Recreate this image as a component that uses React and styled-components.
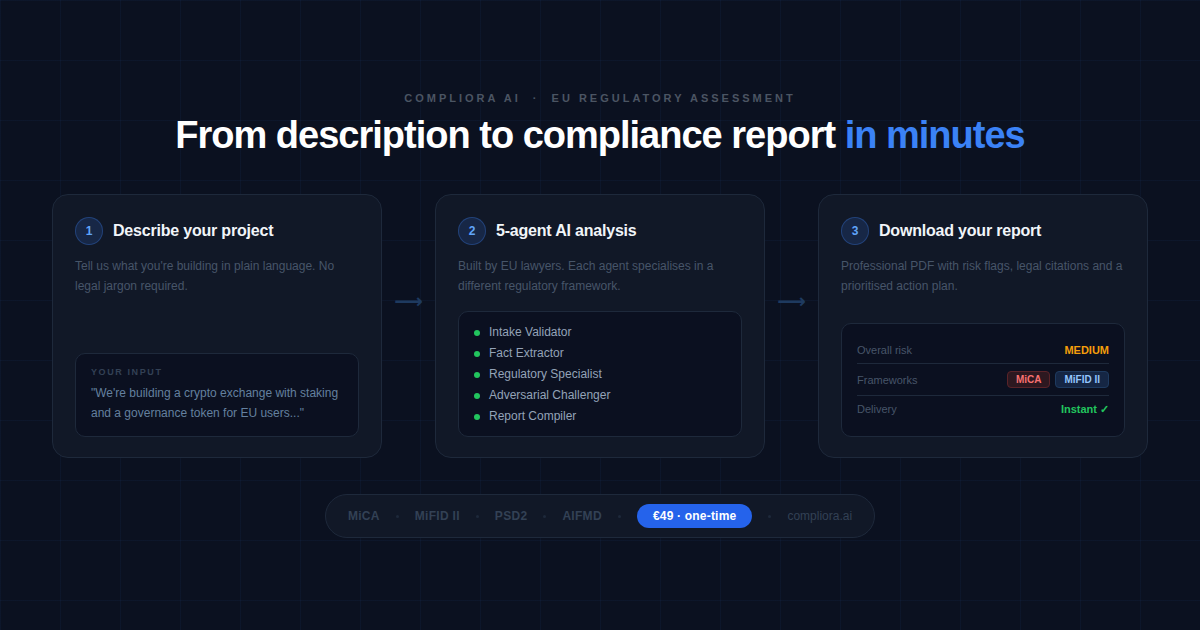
import React from 'react'
import styled, { createGlobalStyle } from 'styled-components'

const GlobalStyle = createGlobalStyle`
  * { box-sizing: border-box; }
  html, body { margin: 0; padding: 0; }
  body { background: #0b1120; font-family: "Liberation Sans", Arial, sans-serif; }
`

const Page = styled.div`
  width: 1200px;
  height: 630px;
  overflow: hidden;
  padding: 92px 52px 0;
  display: flex;
  flex-direction: column;
  align-items: center;
  background-color: #0b1120;
  background-image:
    linear-gradient(rgba(59, 130, 246, 0.05) 1px, transparent 1px),
    linear-gradient(90deg, rgba(59, 130, 246, 0.05) 1px, transparent 1px);
  background-size: 60px 60px;
`

const Eyebrow = styled.div`
  font-size: 11px;
  line-height: 13px;
  font-weight: 700;
  letter-spacing: 3px;
  color: #4b5563;
  white-space: pre;
`

const Title = styled.h1`
  margin: 7px 0 36px;
  font-size: 38px;
  line-height: 46px;
  font-weight: 700;
  letter-spacing: -1px;
  color: #ffffff;
`

const Accent = styled.span`
  color: #3b82f6;
`

const Steps = styled.div`
  width: 100%;
  display: flex;
  align-items: stretch;
`

const Card = styled.section`
  flex: 0 0 330px;
  height: 264px;
  padding: 22px 22px 20px;
  display: flex;
  flex-direction: column;
  background: #111827;
  border: 1px solid #1e293b;
  border-radius: 16px;
`

const CardHead = styled.div`
  display: flex;
  align-items: center;
  gap: 10px;
  margin-bottom: 11px;
`

const Badge = styled.span`
  flex: 0 0 28px;
  height: 28px;
  display: flex;
  align-items: center;
  justify-content: center;
  border-radius: 50%;
  background: rgba(59, 130, 246, 0.15);
  border: 1px solid rgba(59, 130, 246, 0.3);
  color: #60a5fa;
  font-size: 12px;
  font-weight: 700;
`

const CardTitle = styled.h2`
  margin: 0;
  font-size: 16px;
  line-height: 28px;
  font-weight: 700;
  letter-spacing: -0.2px;
  color: #f1f5f9;
`

const Desc = styled.p`
  margin: 0;
  font-size: 12px;
  line-height: 20px;
  color: #475569;
`

const Inset = styled.div`
  margin-top: auto;
  background: #0b1020;
  border: 1px solid #1e293b;
  border-radius: 10px;
  padding: ${(p) => p.$pad};
`

const InputLabel = styled.div`
  font-size: 9px;
  line-height: 11px;
  font-weight: 700;
  letter-spacing: 1.6px;
  color: #334155;
  margin-bottom: 5px;
`

const Quote = styled.div`
  font-size: 12px;
  line-height: 20px;
  color: #64809f;
`

const AgentRow = styled.div`
  display: flex;
  align-items: center;
  gap: 9px;
  font-size: 12px;
  line-height: 21px;
  color: #94a3b8;
`

const Dot = styled.span`
  width: 6px;
  height: 6px;
  border-radius: 50%;
  background: #22c55e;
`

const Arrow = styled.div`
  flex: 1;
  display: flex;
  align-items: center;
  justify-content: center;
  padding-bottom: 50px;
  font-family: "DejaVu Sans", sans-serif;
  font-size: 20px;
  font-weight: 700;
  color: #1e3a5f;
`

const ResultRow = styled.div`
  display: flex;
  align-items: center;
  justify-content: space-between;
  height: ${(p) => p.$h}px;
  border-bottom: ${(p) => (p.$last ? 'none' : '1px solid #1e293b')};
`

const ResultLabel = styled.span`
  font-size: 11px;
  color: #475569;
`

const ResultValue = styled.span`
  font-size: 11px;
  font-weight: 700;
  color: ${(p) => p.$color};
`

const Tags = styled.div`
  display: flex;
  gap: 5px;
`

const Tag = styled.span`
  height: 17px;
  padding: 0 8px;
  display: flex;
  align-items: center;
  border-radius: 4px;
  font-size: 10px;
  font-weight: 700;
  color: ${(p) => (p.$red ? '#f87171' : '#93c5fd')};
  background: ${(p) => (p.$red ? '#2d1820' : '#152644')};
  border: 1px solid ${(p) => (p.$red ? '#5a2329' : '#1e3a5f')};
`

const Footer = styled.div`
  margin-top: 36px;
  height: 44px;
  padding: 0 22px;
  display: flex;
  align-items: center;
  gap: 16px;
  background: #111827;
  border: 1px solid #1e293b;
  border-radius: 22px;
`

const Framework = styled.span`
  font-size: 12px;
  font-weight: 700;
  letter-spacing: 0.3px;
  color: #334155;
`

const Sep = styled.span`
  width: 3px;
  height: 3px;
  border-radius: 50%;
  background: #1e293b;
`

const Price = styled.span`
  height: 24px;
  padding: 0 16px;
  display: flex;
  align-items: center;
  border-radius: 12px;
  background: #2563eb;
  color: #ffffff;
  font-size: 12px;
  font-weight: 700;
  letter-spacing: 0.2px;
`

const Domain = styled.span`
  font-size: 12px;
  color: #334155;
`

const agents = ['Intake Validator', 'Fact Extractor', 'Regulatory Specialist', 'Adversarial Challenger', 'Report Compiler']
const frameworks = ['MiCA', 'MiFID II', 'PSD2', 'AIFMD']

const Step = ({ number, title, text, children }) => (
  <Card>
    <CardHead>
      <Badge>{number}</Badge>
      <CardTitle>{title}</CardTitle>
    </CardHead>
    <Desc>{text}</Desc>
    {children}
  </Card>
)

const App = () => {
  return (
    <Page>
      <GlobalStyle />
      <Eyebrow>COMPLIORA AI  ·  EU REGULATORY ASSESSMENT</Eyebrow>
      <Title>From description to compliance report <Accent>in minutes</Accent></Title>
      <Steps>
        <Step number="1" title="Describe your project" text="Tell us what you're building in plain language. No legal jargon required.">
          <Inset $pad="13px 15px 13px">
            <InputLabel>YOUR INPUT</InputLabel>
            <Quote>"We're building a crypto exchange with staking and a governance token for EU users..."</Quote>
          </Inset>
        </Step>
        <Arrow>⟶</Arrow>
        <Step number="2" title="5-agent AI analysis" text="Built by EU lawyers. Each agent specialises in a different regulatory framework.">
          <Inset $pad="10px 15px 9px">
            {agents.map((agent) => (
              <AgentRow key={agent}>
                <Dot />
                {agent}
              </AgentRow>
            ))}
          </Inset>
        </Step>
        <Arrow>⟶</Arrow>
        <Step number="3" title="Download your report" text="Professional PDF with risk flags, legal citations and a prioritised action plan.">
          <Inset $pad="13px 15px 14px">
            <ResultRow $h={27}>
              <ResultLabel>Overall risk</ResultLabel>
              <ResultValue $color="#f59e0b">MEDIUM</ResultValue>
            </ResultRow>
            <ResultRow $h={32}>
              <ResultLabel>Frameworks</ResultLabel>
              <Tags>
                <Tag $red>MiCA</Tag>
                <Tag>MiFID II</Tag>
              </Tags>
            </ResultRow>
            <ResultRow $h={26} $last>
              <ResultLabel>Delivery</ResultLabel>
              <ResultValue $color="#22c55e">Instant ✓</ResultValue>
            </ResultRow>
          </Inset>
        </Step>
      </Steps>
      <Footer>
        {frameworks.map((name) => (
          <React.Fragment key={name}>
            <Framework>{name}</Framework>
            <Sep />
          </React.Fragment>
        ))}
        <Price>€49 · one-time</Price>
        <Sep />
        <Domain>compliora.ai</Domain>
      </Footer>
    </Page>
  )
}

export default App
